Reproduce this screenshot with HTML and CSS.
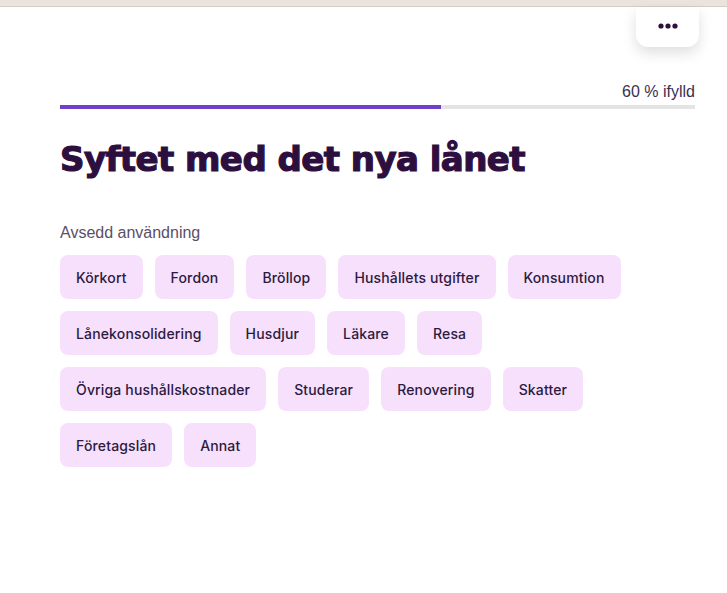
FILE: index.html
```html
<!DOCTYPE html>
<html lang="sv">
<head>
    <meta charset="UTF-8">
    <meta name="viewport" content="width=device-width, initial-scale=1.0">
    <title>Syftet med det nya lånet</title>
    <link rel="stylesheet" href="styles.css">
</head>
<body>
    <div class="top-strip"></div>

    <button class="menu-button" aria-label="Meny">
        <svg width="20" height="6" viewBox="0 0 20 6">
            <circle cx="3" cy="3" r="2.6" fill="#2d0f3f"/>
            <circle cx="10" cy="3" r="2.6" fill="#2d0f3f"/>
            <circle cx="17" cy="3" r="2.6" fill="#2d0f3f"/>
        </svg>
    </button>

    <main class="page">
        <div class="progress">
            <div class="progress-label">60 % ifylld</div>
            <div class="progress-track">
                <div class="progress-fill" style="width: 60%"></div>
            </div>
        </div>

        <h1>Syftet med det nya lånet</h1>

        <p class="field-label">Avsedd användning</p>
        <div class="chips">
            <button class="chip">Körkort</button>
            <button class="chip">Fordon</button>
            <button class="chip">Bröllop</button>
            <button class="chip">Hushållets utgifter</button>
            <button class="chip">Konsumtion</button>
            <button class="chip">Lånekonsolidering</button>
            <button class="chip">Husdjur</button>
            <button class="chip">Läkare</button>
            <button class="chip">Resa</button>
            <button class="chip">Övriga hushållskostnader</button>
            <button class="chip">Studerar</button>
            <button class="chip">Renovering</button>
            <button class="chip">Skatter</button>
            <button class="chip">Företagslån</button>
            <button class="chip">Annat</button>
        </div>
    </main>
</body>
</html>
```

FILE: styles.css
```css
body {
    margin: 0;
    background-color: #fff;
    font-family: "Liberation Sans", Arial, sans-serif;
    color: #2d0f3f;
}
.top-strip {
    height: 6px;
    background-color: #ebe3de;
    border-bottom: 1px solid #d6cbc5;
}
.menu-button {
    position: absolute;
    top: 7px;
    left: 636px;
    width: 63px;
    height: 40px;
    border: none;
    background-color: #fff;
    border-radius: 0 0 12px 12px;
    box-shadow: 0 6px 14px rgba(0, 0, 0, 0.13);
    display: flex;
    align-items: center;
    justify-content: center;
    padding: 0 0 2px 0;
    cursor: pointer;
}
.page {
    width: 635px;
    padding: 75px 0 0 60px;
}
.progress-label {
    text-align: right;
    font-size: 16px;
    color: #3b2f4f;
    line-height: 20px;
}
.progress-track {
    margin-top: 3px;
    height: 4px;
    background-color: #e4e4e4;
}
.progress-fill {
    height: 100%;
    background-color: #7040c8;
}
h1 {
    margin: 30px 0 0 0;
    font-family: "DejaVu Sans", sans-serif;
    font-size: 34px;
    line-height: 40px;
    font-weight: 700;
    letter-spacing: -0.55px;
    -webkit-text-stroke: 1.2px #2d0f3f;
    color: #2d0f3f;
}
.field-label {
    margin: 44px 0 0 0;
    font-size: 16px;
    line-height: 20px;
    color: #5b4e68;
}
.chips {
    display: flex;
    flex-wrap: wrap;
    gap: 12px;
    margin-top: 12px;
}
.chip {
    height: 44px;
    padding: 0 16px;
    border: none;
    border-radius: 8px;
    background-color: #f6e0fc;
    font-family: Inter, "Liberation Sans", sans-serif;
    font-size: 14px;
    font-weight: 500;
    letter-spacing: 0.15px;
    color: #2d1a3f;
    cursor: pointer;
}
```
